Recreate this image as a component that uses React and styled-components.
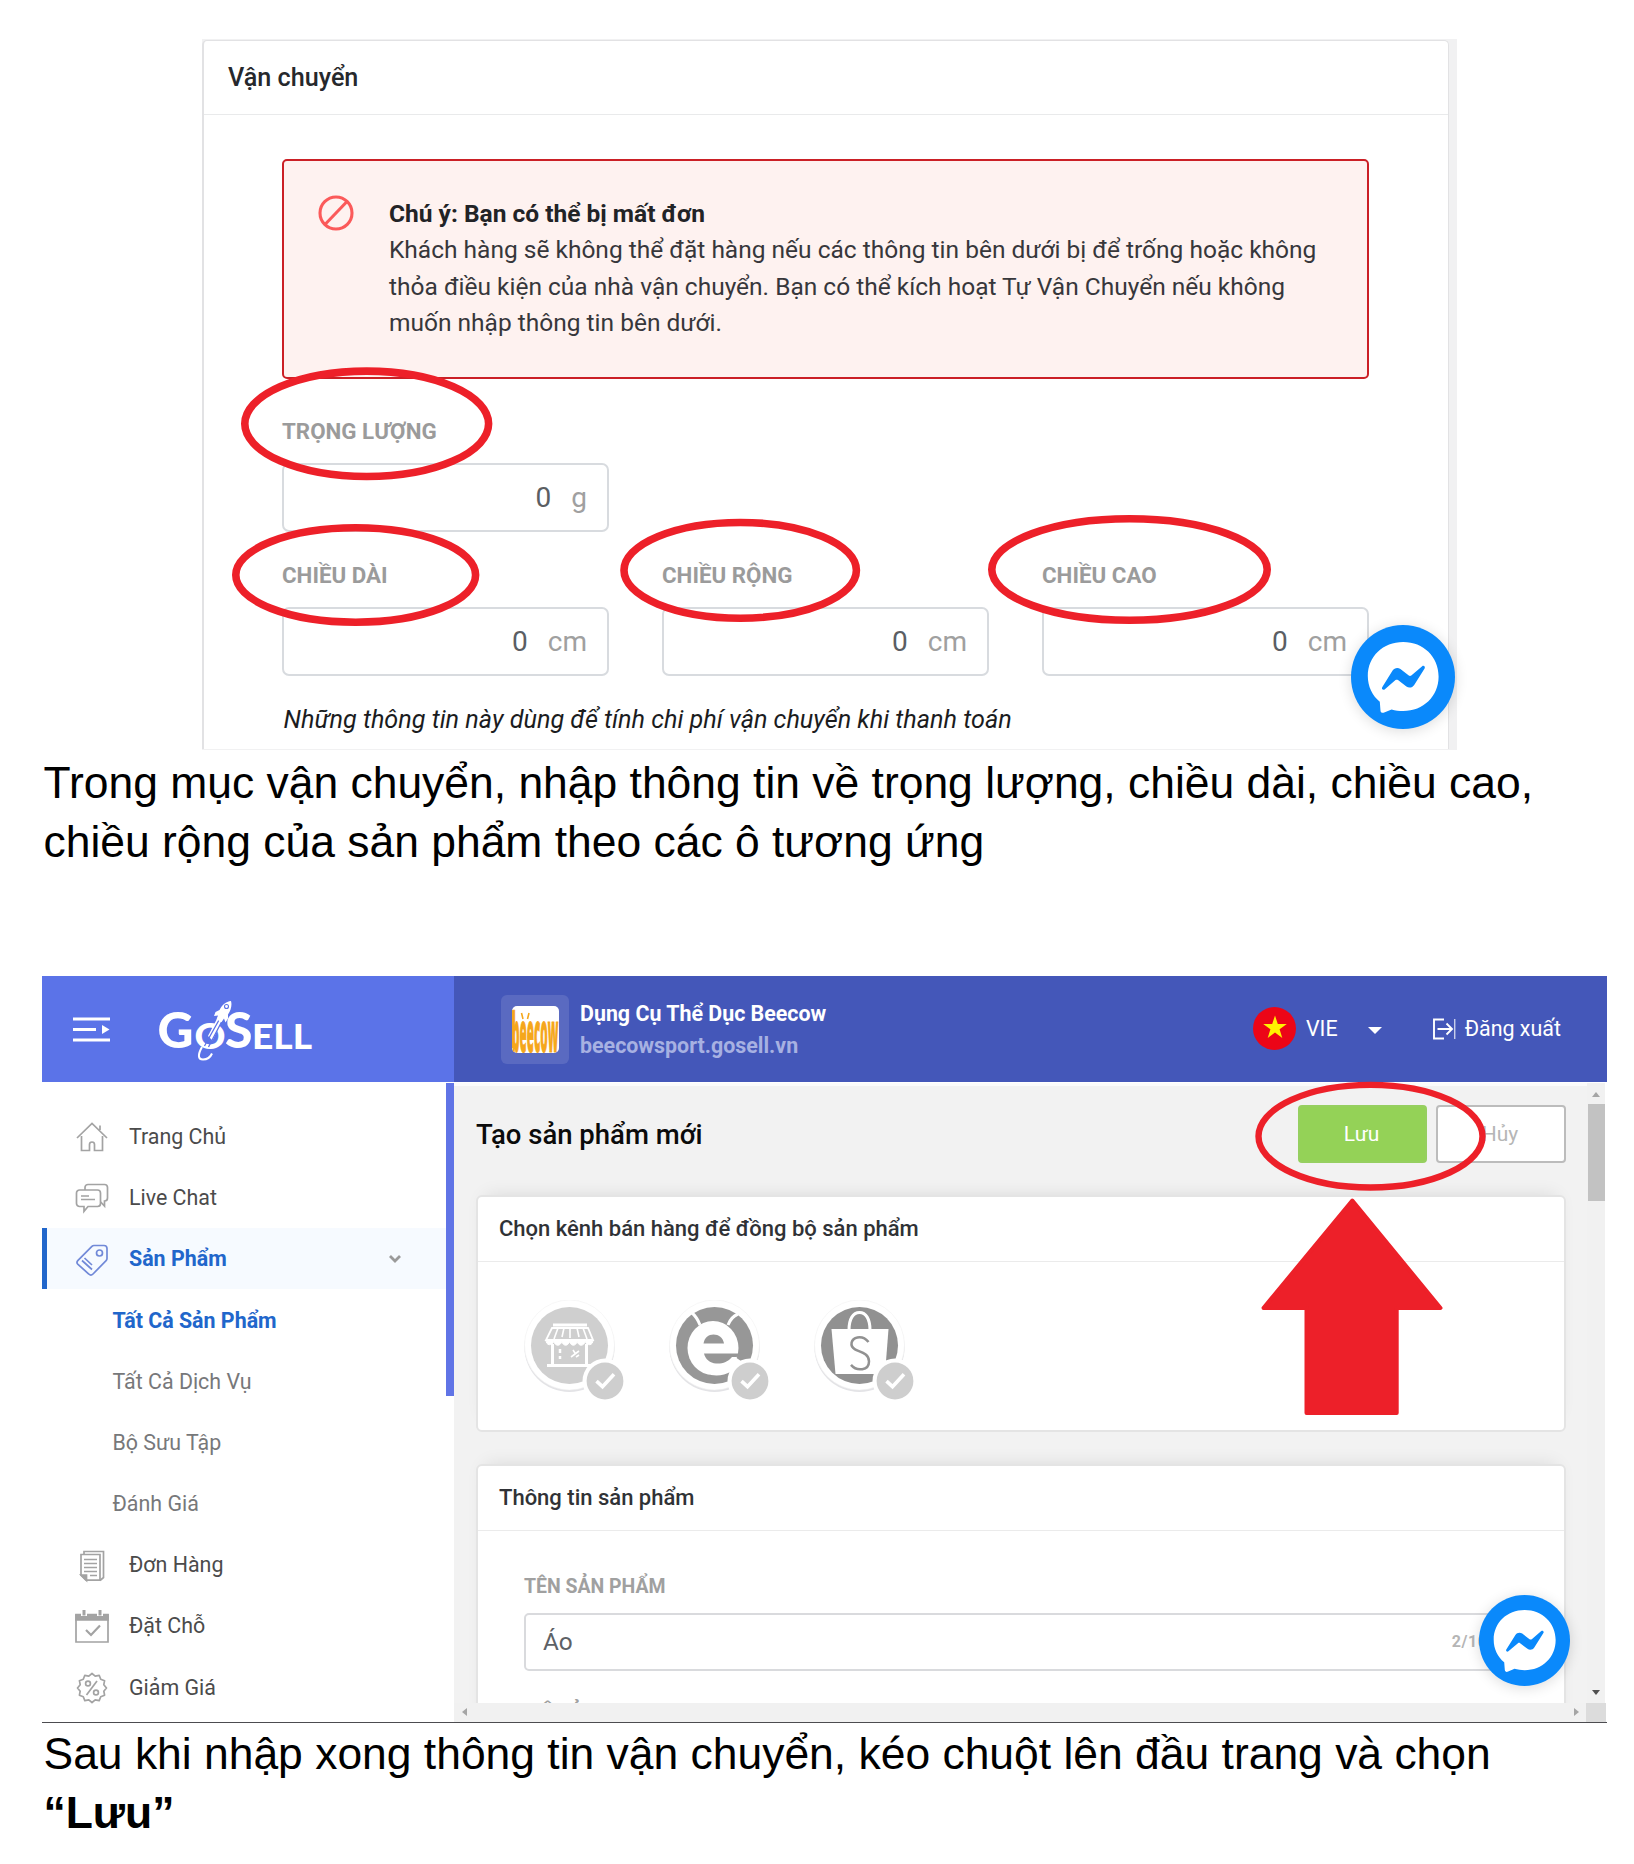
import React from 'react';
import styled, { createGlobalStyle, css } from 'styled-components';

const GlobalStyle = createGlobalStyle`
  *, *::before, *::after { box-sizing: border-box; }
  html, body { margin: 0; padding: 0; background: #fff; }
`;

const RED = '#ed2029';

const Page = styled.div`
  width: 1634px;
  height: 1864px;
  overflow: hidden;
  display: flex;
  flex-direction: column;
  background: #fff;
  font-family: Roboto, "Liberation Sans", sans-serif;
`;

const Caption = styled.p`
  margin: ${(p) => p.$top}px 0 0 43.5px;
  font-family: "Liberation Sans", Arial, sans-serif;
  font-size: 44.43px;
  line-height: ${(p) => p.$leading}px;
  color: #000;
  white-space: nowrap;
`;

const Overlay = styled.svg`
  position: absolute;
  inset: 0;
  width: 100%;
  height: 100%;
  overflow: visible;
  pointer-events: none;
`;

/* ---------- shipping figure ---------- */

const ShippingFigure = styled.section`
  position: relative;
  flex: none;
  margin: 39px 0 0 202px;
  width: 1255px;
  height: 711px;
  padding: 1px 8px 0 0;
  background: #f1f1f2;
`;

const ShippingCard = styled.div`
  height: 709px;
  background: #fff;
  border: 2px solid #e2e2e4;
  border-width: 1px 1px 0 2px;
  border-radius: 5px 5px 0 0;
`;

const ShippingTitle = styled.h2`
  margin: 0;
  height: 74px;
  padding-left: 24px;
  display: flex;
  align-items: center;
  font-size: 25.2px;
  font-weight: 500;
  color: #26282c;
  border-bottom: 1px solid #e9eaeb;
`;

const ShippingBody = styled.div`
  padding: 44px 79px 0 78px;
`;

const Alert = styled.div`
  display: flex;
  height: 220px;
  padding: 35px 0 0 34px;
  background: #fef2f0;
  border: 2px solid #cb2026;
  border-radius: 5px;
`;

const AlertIcon = styled.svg`
  flex: none;
  width: 36px;
  height: 36px;
  margin: -1px 35px 0 0;
`;

const AlertText = styled.p`
  margin: 0;
  font-size: 24.5px;
  line-height: 36.4px;
  color: #37373b;
  white-space: nowrap;
  strong { color: #222326; font-weight: 700; }
`;

const FieldGrid = styled.div`
  display: grid;
  grid-template-columns: repeat(3, 1fr);
  column-gap: 53px;
  margin-top: ${(p) => p.$top}px;
`;

const FieldLabel = styled.div`
  height: 34px;
  line-height: 33px;
  margin-bottom: 14px;
  font-size: 22.35px;
  font-weight: 700;
  color: #9b9b9b;
`;

const UnitInput = styled.div`
  height: 69px;
  display: flex;
  align-items: center;
  justify-content: flex-end;
  gap: 20px;
  padding-right: 20px;
  border: 2px solid #d8dbdf;
  border-radius: 7px;
  font-size: 28px;
  color: #5b5e63;
`;

const Unit = styled.span`
  color: #a0a0a0;
`;

const Note = styled.p`
  margin: 26px 0 0 1.5px;
  line-height: 36px;
  font-size: 25.2px;
  font-style: italic;
  color: #1b1c1e;
  white-space: nowrap;
`;

const Messenger = styled.div`
  position: absolute;
  left: ${(p) => p.$x}px;
  top: ${(p) => p.$y}px;
  width: ${(p) => p.$size}px;
  height: ${(p) => p.$size}px;
  border-radius: 50%;
  background: #0a89fb;
  box-shadow: 0 2px 14px rgba(0, 0, 0, 0.14);
  svg { display: block; width: 100%; height: 100%; }
`;

function MessengerButton({ x, y, size }) {
  return (
    <Messenger $x={x} $y={y} $size={size}>
      <svg viewBox="0 0 104 104">
        <path
          d="M52.2 17C32 17 16.8 31.500 16.800 51c0 10.500 4.600 19.600 12 25.800l.7 9c.2 1.800 1.600 2.400 3.100 1.900l8-3.300c3.600 1 7.600 1.600 11.600 1.600C72.400 86 87.600 71.200 87.600 51.500S72.400 17 52.200 17z"
          fill="#fff"
        />
        <path
          d="M31.200 62.200 41.600 45.600c1.700-2.700 5.300-3.400 7.800-1.500l8.400 6.400c.7.600 1.700.6 2.500 0L71.200 41.200c1.500-1.100 3.400.6 2.400 2.200L63.200 60c-1.700 2.700-5.300 3.400-7.800 1.500L47 55.100c-.7-.6-1.700-.6-2.500 0L33.600 64.400c-1.500 1.100-3.400-.6-2.400-2.200z"
          fill="#0a89fb"
        />
      </svg>
    </Messenger>
  );
}

function Ring({ left, right, top, bottom, width = 7.6 }) {
  return (
    <ellipse
      cx={(left + right) / 2}
      cy={(top + bottom) / 2}
      rx={(right - left - width) / 2}
      ry={(bottom - top - width) / 2}
      fill="none"
      stroke={RED}
      strokeWidth={width}
    />
  );
}

function DimensionField({ label, unit }) {
  return (
    <div>
      <FieldLabel>{label}</FieldLabel>
      <UnitInput>
        <span>0</span>
        <Unit>{unit}</Unit>
      </UnitInput>
    </div>
  );
}

function Shipping() {
  return (
    <ShippingFigure>
      <ShippingCard>
        <ShippingTitle>Vận chuyển</ShippingTitle>
        <ShippingBody>
          <Alert>
            <AlertIcon viewBox="0 0 36 36">
              <circle cx="18" cy="18" r="16" fill="none" stroke="#fb5a5a" strokeWidth="3.100" />
              <path d="M7 29.500 29 6.500" stroke="#fb5a5a" strokeWidth="3.100" />
            </AlertIcon>
            <AlertText>
              <strong>Chú ý: Bạn có thể bị mất đơn</strong>
              <br />
              Khách hàng sẽ không thể đặt hàng nếu các thông tin bên dưới bị để trống hoặc không
              <br />
              thỏa điều kiện của nhà vận chuyển. Bạn có thể kích hoạt Tự Vận Chuyển nếu không
              <br />
              muốn nhập thông tin bên dưới.
            </AlertText>
          </Alert>
          <FieldGrid $top={36}>
            <DimensionField label="TRỌNG LƯỢNG" unit="g" />
          </FieldGrid>
          <FieldGrid $top={27}>
            <DimensionField label="CHIỀU DÀI" unit="cm" />
            <DimensionField label="CHIỀU RỘNG" unit="cm" />
            <DimensionField label="CHIỀU CAO" unit="cm" />
          </FieldGrid>
          <Note>Những thông tin này dùng để tính chi phí vận chuyển khi thanh toán</Note>
        </ShippingBody>
      </ShippingCard>
      <MessengerButton x={1149} y={586} size={104} />
      <Overlay>
        <Ring left={39} right={290.400} top={328.300} bottom={441.300} />
        <Ring left={30} right={277.400} top={485} bottom={587} />
        <Ring left={418.200} right={658.200} top={479.700} bottom={583} />
        <Ring left={786} right={1069} top={476} bottom={585} />
      </Overlay>
    </ShippingFigure>
  );
}

/* ---------- dashboard figure ---------- */

const Dashboard = styled.section`
  position: relative;
  flex: none;
  margin: 104px 0 0 42px;
  width: 1565px;
  height: 747px;
  display: flex;
  flex-direction: column;
  background: #fff;
  border-bottom: 1px solid #4c4c50;
`;

const TopBar = styled.header`
  display: flex;
  height: 106px;
  flex: none;
  color: #fff;
  background: #4457b9;
`;

const Brand = styled.div`
  width: 412px;
  display: flex;
  align-items: center;
  padding-left: 31px;
  background: #5b73e8;
`;

const MenuIcon = styled.svg`
  width: 37px;
  height: 26px;
  margin-right: 45px;
`;

const Logo = styled.svg`
  width: 170px;
  height: 76px;
`;

const StoreTile = styled.div`
  width: 68px;
  height: 69px;
  margin: 19px 11px 0 47px;
  display: flex;
  align-items: center;
  justify-content: center;
  border-radius: 6px;
  background: #5a6ac1;
`;

const StoreThumb = styled.svg`
  width: 47px;
  height: 47px;
  border-radius: 5px;
  background: #fff;
`;

const StoreText = styled.div`
  padding-top: 22px;
  font-size: 21.4px;
  font-weight: 700;
  line-height: 32px;
`;

const StoreUrl = styled.div`
  color: #a7b1e2;
`;

const TopActions = styled.div`
  margin-left: auto;
  padding-right: 46px;
  display: flex;
  align-items: center;
  font-size: 21.45px;
`;

const Flag = styled.svg`
  width: 43px;
  height: 43px;
  margin-right: 10px;
`;

const Caret = styled.span`
  margin: 3px 50px 0 30px;
  border: 7.500px solid transparent;
  border-top: 7px solid #fff;
  border-bottom: 0;
`;

const LogoutIcon = styled.svg`
  width: 24px;
  height: 24px;
  margin-right: 9px;
`;

const Body = styled.div`
  display: flex;
  height: 639px;
  margin-top: 1px;
`;

const Sidebar = styled.nav`
  width: 404px;
  padding-top: 23px;
`;

const SidebarRail = styled.div`
  width: 8px;
  &::before {
    content: '';
    display: block;
    height: 313px;
    background: #6074e6;
  }
`;

const NavRow = styled.div`
  display: flex;
  align-items: center;
  height: 61.2px;
  padding-left: ${(p) => (p.$sub ? 70.5 : 33)}px;
  padding-top: 0.5px;
  font-size: 21.4px;
  color: ${(p) => (p.$sub ? '#77787a' : '#4b4b4b')};
  ${(p) => p.$highlight && css`color: #2166cb; font-weight: 700;`}
  ${(p) => p.$active && css`
    padding-left: 28px;
    border-left: 5px solid #2166cb;
    background: #f6faff;
    color: #2166cb;
    font-weight: 700;
  `}
`;

const NavIcon = styled.svg`
  width: 34px;
  height: 34px;
  margin: 2px 20px 0 0;
  fill: none;
  stroke: ${(p) => p.$tone || '#a3a3a3'};
  stroke-width: 1.700;
`;

const Chevron = styled.svg`
  width: 14px;
  height: 10px;
  margin: 0 44px 0 auto;
`;

const Main = styled.main`
  width: 1133px;
  display: flex;
  flex-direction: column;
  background: #f2f2f2;
`;

const Viewport = styled.div`
  height: 620px;
  overflow: hidden;
  border-top: 3px solid #fbfbfb;
  padding: 19px 21px 0 22px;
`;

const HScroll = styled.div`
  height: 19px;
  padding: 0 8px 0 8px;
  display: flex;
  align-items: center;
  justify-content: space-between;
  background: #f1f1f1;
`;

const VScroll = styled.div`
  width: 18px;
  display: flex;
  flex-direction: column;
  align-items: center;
  background: #f1f1f1;
`;

const VThumb = styled.div`
  width: 17px;
  height: 97px;
  margin-top: 7px;
  background: #c2c2c2;
`;

const Corner = styled.div`
  width: 20px;
  height: 19px;
  margin-top: 8px;
  background: #dcdcdc;
`;

const Tick = styled.span`
  width: 0;
  height: 0;
  border: 4.500px solid transparent;
  ${(p) => p.$dir === 'up' && css`margin-top: 9px; border-top: 0; border-bottom: 5px solid #a5a5a5;`}
  ${(p) => p.$dir === 'down' && css`margin-top: auto; border-bottom: 0; border-top: 5px solid #505050;`}
  ${(p) => p.$dir === 'left' && css`border-left: 0; border-right: 5px solid #a5a5a5;`}
  ${(p) => p.$dir === 'right' && css`border-right: 0; border-left: 5px solid #a5a5a5;`}
`;

const TitleRow = styled.div`
  display: flex;
  align-items: center;
  height: 58px;
  margin-bottom: 32px;
`;

const PageTitle = styled.h1`
  margin: 0 auto 0 0;
  padding-top: 2px;
  font-size: 27.5px;
  font-weight: 500;
  color: #0b0b0b;
`;

const Button = styled.button`
  width: ${(p) => (p.$primary ? 129 : 130)}px;
  height: 58px;
  margin: 0 0 0 ${(p) => (p.$primary ? 0 : 9)}px;
  padding: 0 2px 0 0;
  border: 2px solid ${(p) => (p.$primary ? '#96cf60' : '#bcbcbc')};
  border-radius: 4px;
  background: ${(p) => (p.$primary ? '#94d257' : '#fff')};
  color: ${(p) => (p.$primary ? '#fff' : '#b6b6b6')};
  font: 400 21px Roboto, sans-serif;
`;

const Card = styled.div`
  height: ${(p) => p.$height}px;
  margin-bottom: 32px;
  background: #fff;
  border: 2px solid #e4e4e4;
  border-radius: 6px;
  box-shadow: 0 -8px 18px -10px rgba(0, 0, 0, 0.12);
`;

const CardHeader = styled.h2`
  margin: 0;
  height: 65px;
  padding-left: 21px;
  display: flex;
  align-items: center;
  border-bottom: 1px solid #ebebeb;
  font-size: 22px;
  font-weight: 500;
  color: #303236;
`;

const Channels = styled.div`
  display: flex;
  gap: 45.300px;
  padding: 38px 0 0 45.5px;
`;

const Channel = styled.svg`
  width: 100px;
  height: 101px;
`;

const FormBody = styled.div`
  padding: 42px 46px 0 46px;
`;

const FormLabel = styled.div`
  height: 28px;
  line-height: 28px;
  margin-bottom: ${(p) => p.$gap || 0}px;
  font-size: 19.45px;
  font-weight: 700;
  color: #a0a0a0;
`;

const NameInput = styled.div`
  height: 58px;
  margin-bottom: 28px;
  padding: 0 19px 0 17px;
  display: flex;
  align-items: center;
  justify-content: space-between;
  border: 2px solid #d9dadd;
  border-radius: 5px;
  font-size: 24.4px;
  color: #5d6166;
`;

const Counter = styled.span`
  font-size: 16px;
  font-weight: 700;
  letter-spacing: 0.5px;
  color: #b5b5b5;
`;

const icons = {
  home: (
    <>
      <path d="M2 18 17 3.500 32 18M25 10V5.500M6.500 16v14.500h8v-6a2.500 2.500 0 0 1 5 0v6h8V16" />
    </>
  ),
  chat: (
    <>
      <path d="M10 8V5.500a3 3 0 0 1 3-3h16.500a3 3 0 0 1 3 3V16a3 3 0 0 1-3 3v5l-3.800-4" />
      <path d="M4.500 8h18a3 3 0 0 1 3 3v10.500a3 3 0 0 1-3 3H13l-4 4.800v-4.800H4.500a3 3 0 0 1-3-3V11a3 3 0 0 1 3-3z" />
      <path d="M6 14h8M6 17.500h14" />
    </>
  ),
  tag: (
    <>
      <path d="M19 2.500h10a3 3 0 0 1 3 3v10a3 3 0 0 1-.9 2.100L18 31a3 3 0 0 1-4.200 0L3 21.500a3 3 0 0 1 0-4.200L16.900 3.400a3 3 0 0 1 2.100-.9z" />
      <circle cx="24.500" cy="10" r="3" />
      <path d="m7 17.500 10 9M9.500 15l7.500 7" />
    </>
  ),
  orders: (
    <>
      <path d="M9 5V2.500h19.500v26L25 31.500" />
      <path d="M6 5.500h19v25.700H11l-5-5z" fill="#fff" />
      <path d="M9 10.500h13M9 14.500h13M9 18.500h13M9 22.500h13M15 26.500h7" />
      <path d="M6 26h5.500v5.500z" fill="#a3a3a3" />
    </>
  ),
  calendar: (
    <>
      <path d="M1 5h32v27H1z" />
      <path d="M1 4.500h32V10H1z" fill="#a3a3a3" />
      <path d="M9 0v6M25 0v6" stroke="#fff" strokeWidth="6" />
      <path d="M9 0v5.500M25 0v5.500" strokeWidth="3" />
      <path d="m11 20 5 5 9-9.500" strokeWidth="2.200" />
    </>
  ),
  discount: (
    <>
      <path d="M17 2.500l3.200 2.600 4-.8 1.500 3.900 3.900 1.500-.8 4 2.700 3.300-2.700 3.200.8 4-3.900 1.500-1.500 3.900-4-.8L17 31.500l-3.200-2.700-4 .8-1.500-3.900-3.900-1.500.8-4L2.500 17l2.700-3.300-.8-4 3.900-1.500 1.500-3.900 4 .8z" strokeLinejoin="round" />
      <circle cx="13" cy="12.500" r="2.400" />
      <circle cx="21" cy="21.500" r="2.400" />
      <path d="M22 10 11.500 24" />
    </>
  ),
};

function NavItem({ icon, children, active }) {
  return (
    <NavRow $active={active}>
      <NavIcon viewBox="0 0 34 34" $tone={active ? '#7189d8' : undefined}>{icons[icon]}</NavIcon>
      {children}
      {active && (
        <Chevron viewBox="0 0 14 10">
          <path d="m2 2 5 5 5-5" fill="none" stroke="#9a9a9a" strokeWidth="2.800" />
        </Chevron>
      )}
    </NavRow>
  );
}

function ChannelBadge({ tone, children }) {
  return (
    <Channel viewBox="0 0 100 101">
      <circle cx="45.500" cy="46.700" r="45.200" fill="#e3e3e6" />
      <circle cx="45.500" cy="45" r="45" fill="#fff" stroke="#f1f1f1" strokeWidth=".6" />
      <circle cx="45.500" cy="45.500" r="38.500" fill={tone} />
      {children}
      <circle cx="81" cy="81" r="22.500" fill="#fff" />
      <circle cx="81" cy="81" r="18.400" fill="#cecece" />
      <path d="m72.500 81.200 6 5.500L90 74.200" fill="none" stroke="#fff" strokeWidth="3.600" />
    </Channel>
  );
}

function GoSellLogo() {
  return (
    <Logo viewBox="154 990 170 76">
      <g fill="#fff" fontFamily="Lato, sans-serif" fontWeight="900">
        <text x="156.500" y="1047" fontSize="49.500" textLength="36" lengthAdjust="spacingAndGlyphs">G</text>
        <text x="193.500" y="1047.500" fontSize="36" textLength="31" lengthAdjust="spacingAndGlyphs">O</text>
        <text x="224" y="1047" fontSize="49.500" textLength="27.500" lengthAdjust="spacingAndGlyphs">S</text>
        <text x="251" y="1047.500" fontSize="34.500" textLength="60" lengthAdjust="spacingAndGlyphs">ELL</text>
      </g>
      <path d="M207 1035 219 1012l4.500 2.500-12 25z" fill="#fff" />
      <path d="M203.500 1045 218 1019M207.500 1046 220.500 1021" stroke="#5b73e8" strokeWidth="1.300" />
      <path d="M230 1000c-5 .6-9 4-11.500 9l-4 2-1.500 4 4-.5-1.500 4 5 2.600 2.500-3.500 1.500 4 2.500-4v-4c3-4.500 4.200-9.500 3-13.600z" fill="#fff" />
      <circle cx="225.500" cy="1005.500" r="2" fill="none" stroke="#5b73e8" strokeWidth="1.100" />
      <path d="M201 1046c-4 7-4.500 12.500 1 12.500 4 0 7.500-2.500 9-6" fill="none" stroke="#fff" strokeWidth="2" />
    </Logo>
  );
}

function DashboardHeader() {
  return (
    <TopBar>
      <Brand>
        <MenuIcon viewBox="0 0 37 26">
          <path d="M0 3h37M0 13.500h23M0 24h37" stroke="#fff" strokeWidth="2.900" />
          <path d="M29 9v9l7.500-4.500z" fill="#fff" />
        </MenuIcon>
        <GoSellLogo />
      </Brand>
      <StoreTile>
        <StoreThumb viewBox="0 0 47 47">
          <g transform="translate(0 46) scale(1 3.700)">
            <text
              fontFamily="Open Sans, sans-serif"
              fontSize="15"
              fontWeight="800"
              fill="#f5a71c"
              stroke="#f5a71c"
              strokeWidth=".25"
              textLength="46.500"
              lengthAdjust="spacingAndGlyphs"
            >
              beecow
            </text>
          </g>
          <path d="M.8 4v38M9.500 7l1.500 6M17 7l-1.500 6" stroke="#f5a71c" strokeWidth="1.600" />
        </StoreThumb>
      </StoreTile>
      <StoreText>
        Dụng Cụ Thể Dục Beecow
        <StoreUrl>beecowsport.gosell.vn</StoreUrl>
      </StoreText>
      <TopActions>
        <Flag viewBox="0 0 43 43">
          <circle cx="21.500" cy="21.500" r="21.500" fill="#ec0517" />
          <path d="m22 8.500 2.800 8.500h9l-7.200 5.300 2.700 8.600-7.300-5.300-7.300 5.300 2.700-8.600L10.200 17h9z" fill="#fff200" />
        </Flag>
        VIE
        <Caret />
        <LogoutIcon viewBox="0 0 24 24">
          <path d="M12 2.500H2v19h10M5.500 12h14M14.500 6.500l5.500 5.500-5.500 5.500" fill="none" stroke="#fff" strokeWidth="1.900" />
          <path d="M22.800 2v20" stroke="#fff" strokeWidth="1" />
        </LogoutIcon>
        Đăng xuất
      </TopActions>
    </TopBar>
  );
}

function ProductForm() {
  return (
    <Viewport>
      <TitleRow>
        <PageTitle>Tạo sản phẩm mới</PageTitle>
        <Button $primary>Lưu</Button>
        <Button>Hủy</Button>
      </TitleRow>
      <Card $height={237}>
        <CardHeader>Chọn kênh bán hàng để đồng bộ sản phẩm</CardHeader>
        <Channels>
          <ChannelBadge tone="#cfcfcf">
            <g stroke="#fff" fill="none">
              <path d="M29 25h34" strokeWidth="3" />
              <path d="M28 28h36l5 12H22z" strokeWidth="1.800" />
              <path d="m34 28-4 11M40 28l-2 9M46 28v10M53 28l2 9M59 28l4 11" strokeWidth="1.600" />
              <path d="M22 40h47c0 6-6 6-7.800 1.500-1.500 5-6.500 5-8 0-1.500 5-6.200 5-7.700 0-1.500 5-6.200 5-7.700 0-1.500 5-6.500 5-8 0C28 46 22 46 22 40z" fill="#fff" strokeWidth="1" />
              <path d="M28.500 44v20M62.500 44v20" strokeWidth="3" />
              <path d="M23 65.500h46" strokeWidth="3.200" />
              <path d="M36 49v4M36 56v3" strokeWidth="2.500" />
              <path d="m47 57 8-6M49 50l2 3M52 57l3-2" strokeWidth="1.600" />
            </g>
          </ChannelBadge>
          <ChannelBadge tone="#979797">
            <g fill="none" stroke="#fff">
              <path d="M22 12q6 5 9 13M69 14q-7 3-10 11" strokeWidth="3" />
            </g>
            <ellipse cx="44" cy="48" rx="25.500" ry="27" fill="#fff" />
            <path d="M40 66c14 2 20-4 26-9l6 4c-6 11-17 16-30 14z" fill="#fff" />
            <path d="M34.500 43.500c1-6 5-9 10-9s9.500 3 10.500 9z" fill="#979797" />
            <path d="M35 53.500h35c.5 3-2.500 4-7 3.500-4 5-10 7-16 6.500-6-.5-10.500-4-12-10z" fill="#979797" />
          </ChannelBadge>
          <ChannelBadge tone="#919191">
            <path d="M35 30c0-11 4-17.500 10.500-17.500S56 19 56 30" fill="none" stroke="#fff" strokeWidth="3" />
            <path d="M17.500 29h57L71 74H21.500z" fill="#fff" />
            <path d="M54.500 42c-3-3.800-7-5.300-11-4.600-6.500 1.200-8.300 8.600-2.500 12 4.500 2.600 14 3.600 14 12 0 9-12 10.500-18 3.500" fill="none" stroke="#919191" strokeWidth="2.500" />
          </ChannelBadge>
        </Channels>
      </Card>
      <Card $height={330}>
        <CardHeader>Thông tin sản phẩm</CardHeader>
        <FormBody>
          <FormLabel $gap={12}>TÊN SẢN PHẨM</FormLabel>
          <NameInput>
            Áo
            <Counter>2/100</Counter>
          </NameInput>
          <FormLabel>MÔ TẢ</FormLabel>
        </FormBody>
      </Card>
    </Viewport>
  );
}

function DashboardView() {
  return (
    <Dashboard>
      <DashboardHeader />
      <Body>
        <Sidebar>
          <NavItem icon="home">Trang Chủ</NavItem>
          <NavItem icon="chat">Live Chat</NavItem>
          <NavItem icon="tag" active>Sản Phẩm</NavItem>
          <NavRow $sub $highlight>Tất Cả Sản Phẩm</NavRow>
          <NavRow $sub>Tất Cả Dịch Vụ</NavRow>
          <NavRow $sub>Bộ Sưu Tập</NavRow>
          <NavRow $sub>Đánh Giá</NavRow>
          <NavItem icon="orders">Đơn Hàng</NavItem>
          <NavItem icon="calendar">Đặt Chỗ</NavItem>
          <NavItem icon="discount">Giảm Giá</NavItem>
        </Sidebar>
        <SidebarRail />
        <Main>
          <ProductForm />
          <HScroll>
            <Tick $dir="left" />
            <Tick $dir="right" />
          </HScroll>
        </Main>
        <VScroll>
          <Tick $dir="up" />
          <VThumb />
          <Tick $dir="down" />
          <Corner />
        </VScroll>
      </Body>
      <MessengerButton x={1437} y={619} size={91} />
      <Overlay>
        <Ring left={1213.300} right={1443.700} top={105.700} bottom={214.700} width={6.400} />
        <path
          d="M1310.300 224.500 1398.500 332H1354.700V437H1264.500V332H1221.500z"
          fill={RED}
          stroke={RED}
          strokeWidth="4"
          strokeLinejoin="round"
        />
      </Overlay>
    </Dashboard>
  );
}

export default function App() {
  return (
    <>
      <GlobalStyle />
      <Page>
        <Shipping />
        <Caption $top={3} $leading={59.300}>
          Trong mục vận chuyển, nhập thông tin về trọng lượng, chiều dài, chiều cao,
          <br />
          chiều rộng của sản phẩm theo các ô tương ứng
        </Caption>
        <DashboardView />
        <Caption $top={2.500} $leading={58.800}>
          Sau khi nhập xong thông tin vận chuyển, kéo chuột lên đầu trang và chọn
          <br />
          <b>“Lưu”</b>
        </Caption>
      </Page>
    </>
  );
}
